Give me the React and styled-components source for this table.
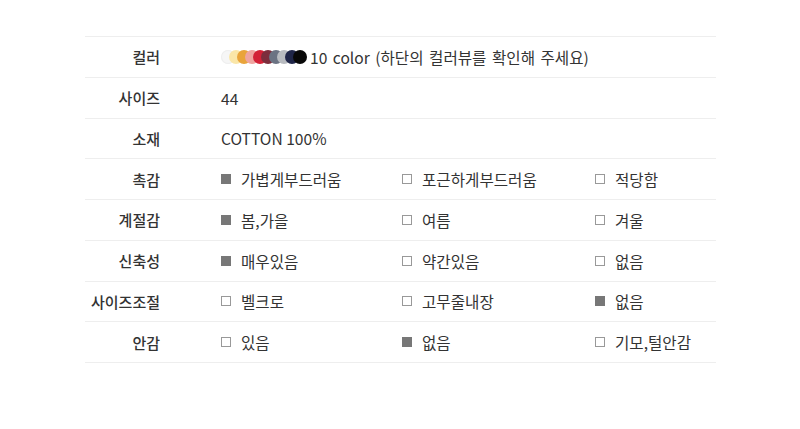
import React from "react";
import styled, { createGlobalStyle } from "styled-components";

const GlobalStyle = createGlobalStyle`
  body {
    margin: 0;
    background: #fff;
    font-family: "Noto Sans CJK KR", "Noto Sans", sans-serif;
    color: #333;
  }
`;

const Page = styled.div`
  padding: 36px 84px 0 85px;
`;

const Table = styled.div`
  width: 631px;
  border-top: 1px solid #eee;
`;

const Row = styled.div`
  display: flex;
  align-items: center;
  height: 40.75px;
  box-sizing: border-box;
  border-bottom: 1px solid #eee;
`;

const Label = styled.div`
  width: 75px;
  flex-shrink: 0;
  text-align: right;
  font-size: 15px;
  font-weight: 500;
  color: #333;
`;

const Value = styled.div`
  margin-left: 61px;
  font-size: 15.6px;
  color: #333;
  display: flex;
  align-items: center;
`;

const ColorText = styled.span`
  word-spacing: 2px;
`;

const Options = styled.div`
  margin-left: 61px;
  display: grid;
  grid-template-columns: 181px 193px auto;
  font-size: 15.6px;
  color: #333;
`;

const Option = styled.div`
  display: flex;
  align-items: center;
  gap: 10px;
`;

const Box = styled.span`
  width: 10px;
  height: 10px;
  box-sizing: border-box;
  display: inline-block;
  background: ${({ checked }) => (checked ? "#777" : "#fff")};
  border: 1px solid ${({ checked }) => (checked ? "#777" : "#999")};
`;

const Swatches = styled.div`
  display: flex;
  margin-right: 3px;
`;

const Swatch = styled.span`
  width: 14px;
  height: 14px;
  border-radius: 50%;
  background: ${({ color }) => color};
  margin-left: ${({ first }) => (first ? 0 : "-6px")};
  ${({ color }) => (color === "#f6f6f6" ? "box-shadow: inset 0 0 0 1px #eee;" : "")}
`;

const colors = [
  "#f6f6f6",
  "#fae6a8",
  "#e9a43a",
  "#efa5a0",
  "#d32237",
  "#7d2d3c",
  "#6b7383",
  "#b8bbc0",
  "#1f2548",
  "#080808",
];

const feelRows = [
  ["촉감", [["가볍게부드러움", true], ["포근하게부드러움", false], ["적당함", false]]],
  ["계절감", [["봄,가을", true], ["여름", false], ["겨울", false]]],
  ["신축성", [["매우있음", true], ["약간있음", false], ["없음", false]]],
  ["사이즈조절", [["벨크로", false], ["고무줄내장", false], ["없음", true]]],
  ["안감", [["있음", false], ["없음", true], ["기모,털안감", false]]],
];

export default function App() {
  return (
    <Page>
      <GlobalStyle />
      <Table>
        <Row>
          <Label>컬러</Label>
          <Value>
            <Swatches>
              {colors.map((c, i) => (
                <Swatch key={c} color={c} first={i === 0} />
              ))}
            </Swatches>
            <ColorText>10 color (하단의 컬러뷰를 확인해 주세요)</ColorText>
          </Value>
        </Row>
        <Row>
          <Label>사이즈</Label>
          <Value>44</Value>
        </Row>
        <Row>
          <Label>소재</Label>
          <Value>COTTON 100%</Value>
        </Row>
        {feelRows.map(([label, opts]) => (
          <Row key={label}>
            <Label>{label}</Label>
            <Options>
              {opts.map(([text, checked]) => (
                <Option key={text}>
                  <Box checked={checked} />
                  {text}
                </Option>
              ))}
            </Options>
          </Row>
        ))}
      </Table>
    </Page>
  );
}
